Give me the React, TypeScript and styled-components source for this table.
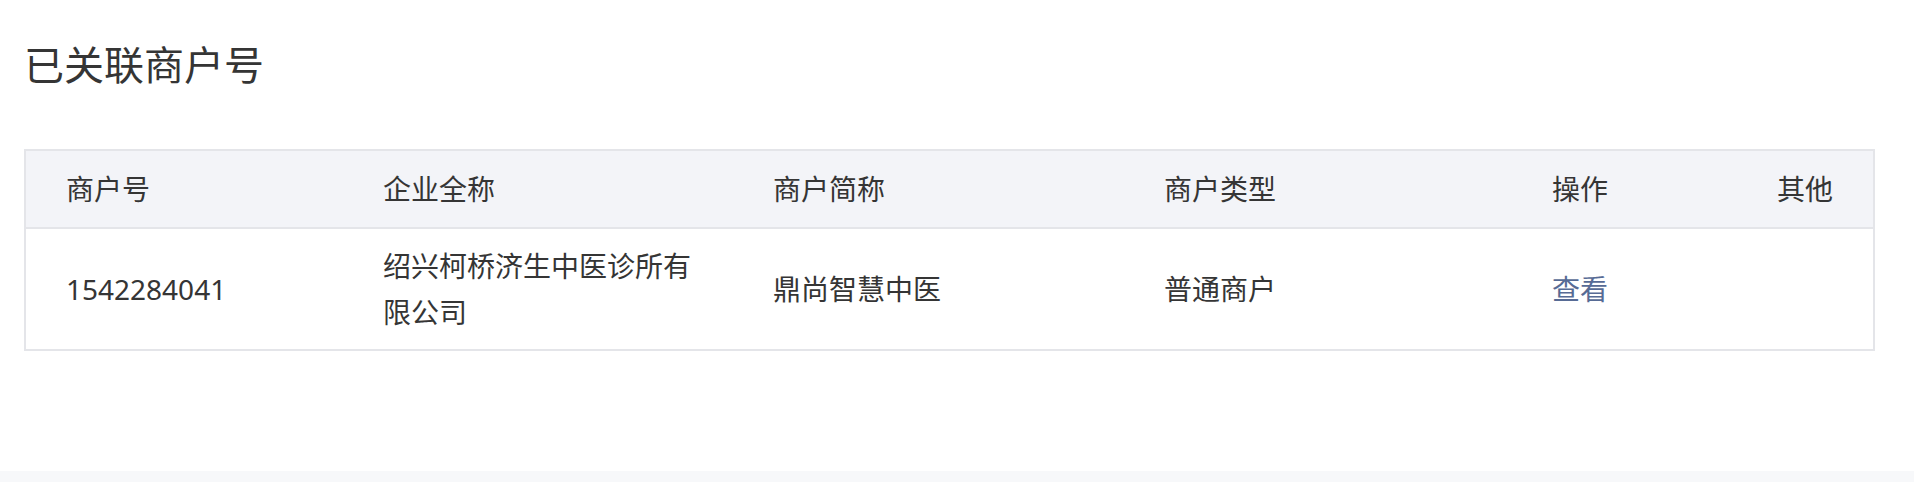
import styled, { createGlobalStyle } from "styled-components";

const GlobalStyle = createGlobalStyle`
  html, body {
    margin: 0;
    padding: 0;
    background: #fff;
  }
  body {
    font-family: "Noto Sans", "Noto Sans CJK SC", sans-serif;
    color: #353535;
  }
`;

const Page = styled.div`
  min-height: 482px;
  display: flex;
  flex-direction: column;
`;

const Section = styled.section`
  flex: 1;
  padding: 37px 39px 0 24px;
`;

const Title = styled.h2`
  margin: 0 0 56px;
  font-size: 40px;
  line-height: 56px;
  font-weight: 400;
  color: #353535;
`;

const Table = styled.div`
  border: 2px solid #e4e5e9;
`;

const Row = styled.div<{ $head?: boolean }>`
  display: grid;
  grid-template-columns: 317px 390px 391px 388px 225px 1fr;
  background: ${(p) => (p.$head ? "#f3f4f8" : "#fff")};
  border-bottom: ${(p) => (p.$head ? "2px solid #e4e5e9" : "none")};
`;

const Cell = styled.div<{ $head?: boolean }>`
  padding: ${(p) => (p.$head ? "15px" : "14px")} 40px;
  font-size: 28px;
  line-height: 46px;
  display: flex;
  align-items: center;
  min-width: 0;
`;

const Link = styled.a`
  color: #576b95;
  text-decoration: none;
  cursor: pointer;
`;

const Footer = styled.div`
  height: 11px;
  background: #f7f8fa;
`;

const columns = ["商户号", "企业全称", "商户简称", "商户类型", "操作", "其他"];

const rows = [
  {
    id: "1542284041",
    company: "绍兴柯桥济生中医诊所有限公司",
    shortName: "鼎尚智慧中医",
    type: "普通商户",
  },
];

export default function App() {
  return (
    <Page>
      <GlobalStyle />
      <Section>
        <Title>已关联商户号</Title>
        <Table>
          <Row $head>
            {columns.map((c) => (
              <Cell key={c} $head>
                {c}
              </Cell>
            ))}
          </Row>
          {rows.map((r) => (
            <Row key={r.id}>
              <Cell>{r.id}</Cell>
              <Cell>{r.company}</Cell>
              <Cell>{r.shortName}</Cell>
              <Cell>{r.type}</Cell>
              <Cell>
                <Link>查看</Link>
              </Cell>
              <Cell />
            </Row>
          ))}
        </Table>
      </Section>
      <Footer />
    </Page>
  );
}
